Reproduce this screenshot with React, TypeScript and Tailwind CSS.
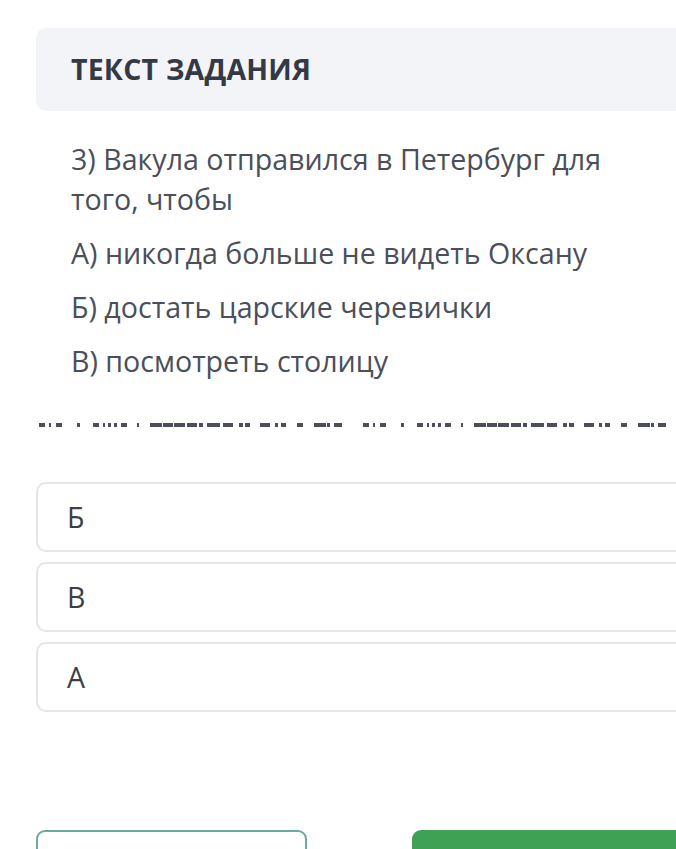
const dashes: [number, number][] = [
  [39, 45], [49, 51], [56, 62], [77, 80], [93, 99], [103, 105], [108, 111], [114, 117], [121, 127],
  [137, 139], [150, 162], [163, 173], [174, 185], [187, 197], [199, 203], [207, 220], [223, 233],
  [239, 243], [245, 250], [260, 270], [275, 278], [281, 286], [297, 303], [314, 326], [327, 330], [334, 342],
];

const DashedLine = () => (
  <svg width="676" height="8" className="block">
    {[0, 324].map((offset) =>
      dashes.map(([a, b]) => (
        <rect key={`${offset}-${a}`} x={a + offset} y={2} width={b - a} height={4} fill="#4b4f5a" />
      ))
    )}
  </svg>
);

const answers = ["Б", "В", "А"];

export default function App() {
  return (
    <div
      className="w-[676px] h-[849px] overflow-hidden bg-white"
      style={{ fontFamily: '"Open Sans", "Noto Sans", sans-serif' }}
    >
      <div className="pt-[28px] pl-[36px]">
        <div className="w-[700px] h-[83px] rounded-[10px] bg-[#f3f4f7] flex items-center pl-[35px]">
          <h2 className="text-[28.5px] font-bold text-[#343a45] tracking-[0.2px]">ТЕКСТ ЗАДАНИЯ</h2>
        </div>

        <div className="pl-[35px] pt-[28px] text-[28.6px] leading-[40px] text-[#4a4f5a] flex flex-col gap-[14px]">
          <p className="w-[580px]">3) Вакула отправился в Петербург для того, чтобы</p>
          <p>А) никогда больше не видеть Оксану</p>
          <p>Б) достать царские черевички</p>
          <p>В) посмотреть столицу</p>
        </div>
      </div>

      <div className="mt-[40px]">
        <DashedLine />
      </div>

      <div className="pl-[36px] pt-[53px] flex flex-col gap-[10px]">
        {answers.map((a) => (
          <div
            key={a}
            className="w-[700px] h-[70px] shrink-0 rounded-[10px] border-2 border-[#e3e5e8] flex items-center pl-[29px] text-[28.5px] text-[#3b3f48]"
          >
            {a}
          </div>
        ))}
      </div>

      <div className="pl-[36px] pt-[118px] flex gap-[105px]">
        <div className="w-[271px] h-[50px] shrink-0 rounded-[9px] border-2 border-[#6ba9a4]" />
        <div className="w-[300px] h-[50px] shrink-0 rounded-[9px] bg-[#3ea153]" />
      </div>
    </div>
  );
}
